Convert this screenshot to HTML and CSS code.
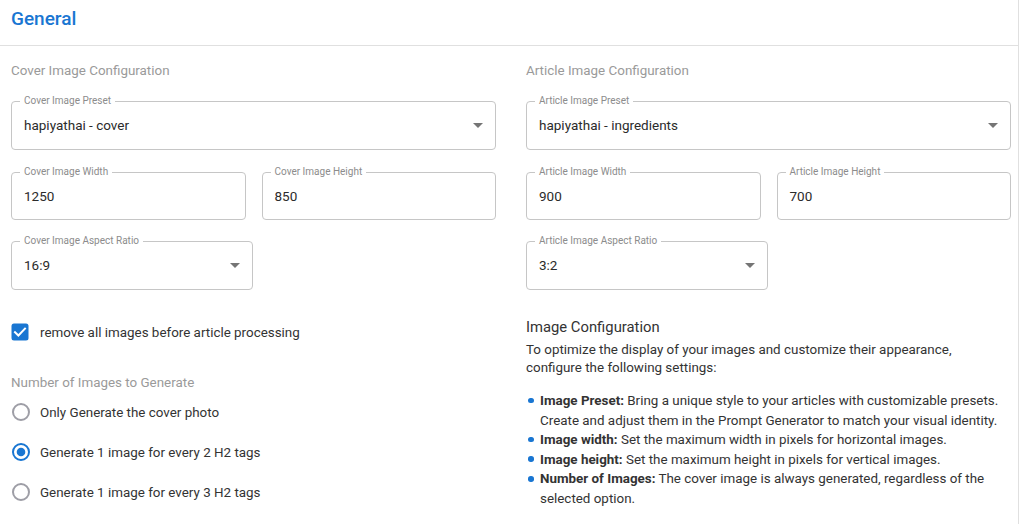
FILE: index.html
```html
<!DOCTYPE html>
<html lang="en">
<head>
<meta charset="utf-8">
<title>General</title>
<link rel="stylesheet" href="styles.css">
</head>
<body>
<div class="card">
  <div class="card-header">
    <h1 class="card-title">General</h1>
  </div>
  <div class="card-body">
    <div class="column">
      <h2 class="section-title">Cover Image Configuration</h2>
      <fieldset class="field select">
        <legend>Cover Image Preset</legend>
        <div class="field-row">
          <span class="value">hapiyathai - cover</span>
          <svg class="arrow" width="10" height="5" viewBox="0 0 10 5"><polygon points="0,0 10,0 5,5"/></svg>
        </div>
      </fieldset>
      <div class="pair">
        <fieldset class="field">
          <legend>Cover Image Width</legend>
          <div class="field-row"><span class="value">1250</span></div>
        </fieldset>
        <fieldset class="field">
          <legend>Cover Image Height</legend>
          <div class="field-row"><span class="value">850</span></div>
        </fieldset>
      </div>
      <fieldset class="field select half">
        <legend>Cover Image Aspect Ratio</legend>
        <div class="field-row">
          <span class="value">16:9</span>
          <svg class="arrow" width="10" height="5" viewBox="0 0 10 5"><polygon points="0,0 10,0 5,5"/></svg>
        </div>
      </fieldset>

      <label class="check-row">
        <svg class="checkbox" width="18" height="18" viewBox="0 0 18 18">
          <rect x="0.5" y="0.5" width="17" height="17" rx="2.5" fill="#1976d2"/>
          <polyline points="4,9.2 7.4,12.5 14,5.6" fill="none" stroke="#fff" stroke-width="2" stroke-linecap="square"/>
        </svg>
        <span>remove all images before article processing</span>
      </label>

      <div class="radio-group">
        <div class="group-title">Number of Images to Generate</div>
        <label class="radio-row">
          <svg class="radio" width="20" height="20" viewBox="0 0 20 20"><circle cx="10" cy="10" r="8" fill="none" stroke="#9e9ea6" stroke-width="2"/></svg>
          <span>Only Generate the cover photo</span>
        </label>
        <label class="radio-row">
          <svg class="radio" width="20" height="20" viewBox="0 0 20 20"><circle cx="10" cy="10" r="8" fill="none" stroke="#1976d2" stroke-width="2"/><circle cx="10" cy="10" r="4.3" fill="#1976d2"/></svg>
          <span>Generate 1 image for every 2 H2 tags</span>
        </label>
        <label class="radio-row">
          <svg class="radio" width="20" height="20" viewBox="0 0 20 20"><circle cx="10" cy="10" r="8" fill="none" stroke="#9e9ea6" stroke-width="2"/></svg>
          <span>Generate 1 image for every 3 H2 tags</span>
        </label>
      </div>
    </div>

    <div class="column">
      <h2 class="section-title">Article Image Configuration</h2>
      <fieldset class="field select">
        <legend>Article Image Preset</legend>
        <div class="field-row">
          <span class="value">hapiyathai - ingredients</span>
          <svg class="arrow" width="10" height="5" viewBox="0 0 10 5"><polygon points="0,0 10,0 5,5"/></svg>
        </div>
      </fieldset>
      <div class="pair">
        <fieldset class="field">
          <legend>Article Image Width</legend>
          <div class="field-row"><span class="value">900</span></div>
        </fieldset>
        <fieldset class="field">
          <legend>Article Image Height</legend>
          <div class="field-row"><span class="value">700</span></div>
        </fieldset>
      </div>
      <fieldset class="field select half">
        <legend>Article Image Aspect Ratio</legend>
        <div class="field-row">
          <span class="value">3:2</span>
          <svg class="arrow" width="10" height="5" viewBox="0 0 10 5"><polygon points="0,0 10,0 5,5"/></svg>
        </div>
      </fieldset>

      <div class="info">
        <h3 class="info-title">Image Configuration</h3>
        <p class="info-text">To optimize the display of your images and customize their appearance, configure the following settings:</p>
        <ul class="info-list">
          <li><strong>Image Preset:</strong> Bring a unique style to your articles with customizable presets. Create and adjust them in the Prompt Generator to match your visual identity.</li>
          <li><strong>Image width:</strong> Set the maximum width in pixels for horizontal images.</li>
          <li><strong>Image height:</strong> Set the maximum height in pixels for vertical images.</li>
          <li><strong>Number of Images:</strong> The cover image is always generated, regardless of the selected option.</li>
        </ul>
      </div>
    </div>
  </div>
</div>
</body>
</html>
```

FILE: styles.css
```css
* { box-sizing: border-box; }

html, body {
  margin: 0;
  padding: 0;
  background: #ffffff;
}

body {
  font-family: Roboto, "Liberation Sans", Arial, sans-serif;
  color: #333333;
  width: 1019px;
  height: 524px;
  overflow: hidden;
}

.card {
  width: 1019px;
  min-height: 524px;
  border-right: 1px solid #e0e0e0;
}

.card-header {
  padding: 7px 11px 14px;
  border-bottom: 1px solid #e0e0e0;
  height: 46px;
}

.card-title {
  margin: 0;
  font-size: 19px;
  line-height: 24px;
  font-weight: 500;
  color: #1976d2;
}

.card-body {
  display: grid;
  grid-template-columns: 485px 485px;
  column-gap: 30px;
  padding: 17px 7px 0 11px;
}

.column {
  display: flex;
  flex-direction: column;
  min-width: 0;
}

.section-title {
  margin: 0 0 16px;
  font-size: 13.4px;
  line-height: 16px;
  font-weight: 400;
  color: #9a9a9a;
}

.field {
  margin: 0;
  padding: 8px 12px 13px;
  border: 1px solid #c6c6c6;
  border-radius: 4px;
  min-width: 0;
}

.field.select {
  padding-bottom: 14px;
}

.field legend {
  margin-left: -4px;
  padding: 0 4px;
  font-size: 10px;
  line-height: 12px;
  color: #8c8c8c;
}

.field-row {
  display: flex;
  align-items: center;
  height: 20px;
}

.value {
  flex: 1;
  font-size: 13.5px;
  line-height: 20px;
  color: #2b2b2b;
  white-space: nowrap;
}

.arrow {
  display: block;
  fill: #757575;
  margin-top: 1px;
}

.pair {
  display: grid;
  grid-template-columns: 1fr 1fr;
  column-gap: 16px;
  margin-top: 16px;
}

.field.half {
  width: 242px;
  margin-top: 15px;
}

.check-row {
  display: flex;
  align-items: center;
  height: 24px;
  margin-top: 30px;
  font-size: 13.4px;
  color: #333333;
}

.checkbox {
  display: block;
  margin: 0 11px 0 0;
}

.radio-group {
  margin-top: 31px;
  display: flex;
  flex-direction: column;
}

.group-title {
  font-size: 13.4px;
  line-height: 16px;
  color: #9a9a9a;
  margin-bottom: 1px;
}

.radio-row {
  display: flex;
  align-items: center;
  height: 40px;
  font-size: 13.4px;
  color: #333333;
}

.radio {
  display: block;
  margin: 0 9px 0 0;
}

.info {
  margin-top: 27px;
  padding-right: 10px;
}

.info-title {
  margin: 0;
  font-size: 14.8px;
  line-height: 20px;
  font-weight: 400;
  color: #333333;
}

.info-text {
  margin: 4px 0 0;
  font-size: 13.4px;
  line-height: 18px;
  color: #333333;
}

.info-list {
  margin: 14px 0 0;
  padding-left: 14px;
  list-style: none;
  font-size: 13.4px;
  line-height: 19.6px;
  color: #333333;
}

.info-list li::before {
  content: "";
  display: inline-block;
  width: 5.5px;
  height: 5.5px;
  border-radius: 50%;
  background: #1976d2;
  margin-left: -12px;
  margin-right: 6.5px;
  vertical-align: middle;
  position: relative;
  top: -1px;
}

.info-list strong {
  font-weight: 700;
}
```
